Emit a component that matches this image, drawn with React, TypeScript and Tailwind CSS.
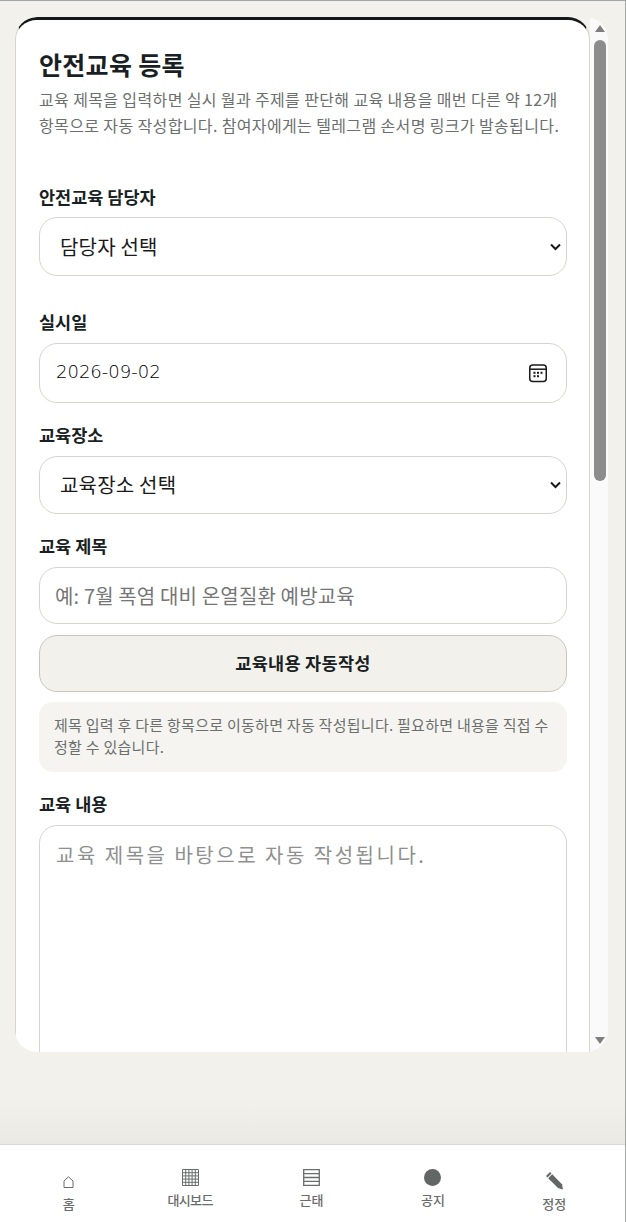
const NOTO = "font-['Noto_Sans_CJK_KR',sans-serif]";

const Label = ({ children, className = '' }: { children: string; className?: string }) => (
  <label className={`block text-[17.5px] font-bold leading-6 text-[#1a1f24] ${className}`}>{children}</label>
);

const fieldClass =
  'block w-full rounded-[18px] border border-[#d6d4cd] bg-white outline-none text-[20px] text-[#1a1a1a]';

const SelectField = ({ text, className }: { text: string; className: string }) => (
  <div className={`relative ${className}`}>
    <select className={`${fieldClass} h-full appearance-none pl-[20px] pr-[24px] tracking-[0.2px]`} defaultValue="">
      <option value="">{text}</option>
    </select>
    <svg
      className="pointer-events-none absolute right-[6px] top-1/2 -translate-y-1/2"
      width="11"
      height="8"
      viewBox="0 0 11 8"
      fill="none"
      stroke="#1a1a1a"
      strokeWidth="2"
    >
      <path d="M1 1.5l4.5 4.5L10 1.5" />
    </svg>
  </div>
);

const NavItem = ({ label, icon, low, tight }: { label: string; icon: React.ReactNode; low?: boolean; tight?: boolean }) => (
  <div className={`flex flex-1 flex-col items-center ${low ? 'pt-[4px]' : ''}`}>
    <div className="flex h-[24px] w-[24px] items-center justify-center">{icon}</div>
    <span className={`mt-[1px] text-[13px] font-medium leading-5 text-[#6a6d6b] ${tight ? 'tracking-[-0.6px]' : ''}`}>{label}</span>
  </div>
);

export default function App() {
  return (
    <div className={`flex h-[1222px] w-[626px] flex-col overflow-hidden border-t border-r border-[#a3a7a5] bg-[#f2f1ec] ${NOTO}`}>
      <div className="ml-[15px] mt-[16px] flex h-[1035px] w-[593px] overflow-hidden rounded-[22px]">
        <div className="h-[1035px] w-[575px] shrink-0 overflow-hidden rounded-t-[22px] border-x border-t-[3px] border-x-[#d6d4cd] border-t-[#14181b] bg-white pl-[23px] pr-[22px] pt-[26px]">
          <h1 className="text-[25px] font-bold leading-9 tracking-[0.3px] text-[#1a1f24]">안전교육 등록</h1>
          <p className="mt-[4px] text-[16px] leading-[26px] tracking-[0.37px] text-[#6b6f6d]">
            교육 제목을 입력하면 실시 월과 주제를 판단해 교육 내용을 매번 다른 약 12개 항목으로 자동 작성합니다. 참여자에게는 텔레그램 손서명 링크가 발송됩니다.
          </p>

          <Label className="mt-[47px]">안전교육 담당자</Label>
          <SelectField text="담당자 선택" className="mt-[8px] h-[59px]" />

          <Label className="mt-[34px]">실시일</Label>
          <div className="mt-[9px] flex h-[60px] items-center rounded-[18px] border border-[#d6d4cd] bg-white pl-[16px] pr-[18px]">
            <input
              className="min-w-0 flex-1 bg-transparent pb-[3px] font-['DejaVu_Sans',sans-serif] text-[18px] font-extralight text-black outline-none"
              defaultValue="2026-09-02"
            />
            <svg width="20" height="20" viewBox="0 0 20 20" fill="none" stroke="#1a1a1a" strokeWidth="1.5">
              <rect x="1.75" y="2" width="16.5" height="16.5" rx="3" />
              <path d="M2 6.2h16" />
              <g fill="#1a1a1a" stroke="none">
                <rect x="9" y="8.8" width="2" height="2" />
                <rect x="12.5" y="8.8" width="2" height="2" />
                <rect x="5.5" y="12.2" width="2" height="2" />
                <rect x="9" y="12.2" width="2" height="2" />
                <rect x="5.5" y="8.8" width="2" height="2" />
              </g>
            </svg>
          </div>

          <Label className="mt-[20px]">교육장소</Label>
          <SelectField text="교육장소 선택" className="mt-[9px] h-[58px]" />

          <Label className="mt-[20px]">교육 제목</Label>
          <input
            className={`${fieldClass} mt-[9px] h-[57px] px-[15px] tracking-[0.15px] placeholder:text-[#767676]`}
            placeholder="예: 7월 폭염 대비 온열질환 예방교육"
          />

          <button className="mt-[11px] block h-[57px] w-full rounded-[18px] border border-[#c8c5bc] bg-[#f2f1ec] text-[17.5px] font-bold tracking-[0.3px] text-[#1a1f24]">
            교육내용 자동작성
          </button>

          <div className="mt-[10px] break-all rounded-[14px] bg-[#f5f4f0] px-[15px] pb-[14px] pt-[12px] text-[15px] leading-[22px] tracking-[0.27px] text-[#6b6f6d]">
            제목 입력 후 다른 항목으로 이동하면 자동 작성됩니다. 필요하면 내용을 직접 수정할 수 있습니다.
          </div>

          <Label className="mt-[20px]">교육 내용</Label>
          <textarea
            className={`${fieldClass} mt-[9px] h-[320px] resize-none px-[16px] py-[14px] tracking-[2.5px] placeholder:text-[#8f8f8f]`}
            placeholder="교육 제목을 바탕으로 자동 작성됩니다."
          />
        </div>

        {/* scrollbar */}
        <div className="flex w-[18px] shrink-0 flex-col items-center bg-[#fafafa] pl-[2px]">
          <svg className="mt-[8px]" width="10" height="7" viewBox="0 0 10 7" fill="#7f7f7f"><path d="M5 0l5 7H0z" /></svg>
          <div className="mt-[8px] h-[441px] w-[12px] shrink-0 rounded-[6px] bg-[#8c8c8c]" />
          <svg className="mt-[556px] shrink-0" width="10" height="7" viewBox="0 0 10 7" fill="#7f7f7f"><path d="M5 7L0 0h10z" /></svg>
        </div>
      </div>

      <div className="h-[92px] flex-1 bg-gradient-to-b from-[#f2f1ec] from-50% to-[#eae9e4]" />

      <nav className="flex h-[78px] shrink-0 border-t border-[#dcd9d2] bg-white pl-[8px] pr-[10px] pt-[20px]">
        <NavItem
          low
          label="홈"
          icon={
            <svg className="mt-[2px]" width="11" height="12" viewBox="0 0 11 12" fill="none" stroke="#6a6d6b" strokeWidth="1">
              <path d="M1 11.5V5L5.5 .8 10 5v6.5z" />
            </svg>
          }
        />
        <NavItem
          tight
          label="대시보드"
          icon={
            <svg width="17" height="17" viewBox="0 0 17 17" fill="none" stroke="#6a6d6b" strokeWidth="1">
              <path d="M.5.5h16v16H.5zM.5 3.7h16M.5 6.9h16M.5 10.1h16M.5 13.3h16M3.7.5v16M6.9.5v16M10.1.5v16M13.3.5v16" />
            </svg>
          }
        />
        <NavItem
          label="근태"
          icon={
            <svg width="17" height="17" viewBox="0 0 17 17" fill="none" stroke="#6a6d6b" strokeWidth="1.3">
              <path d="M.7.7h15.6v15.6H.7zM.7 4.6h15.6M.7 8.5h15.6M.7 12.4h15.6" />
            </svg>
          }
        />
        <NavItem
          label="공지"
          icon={
            <svg width="17" height="17" viewBox="0 0 17 17" fill="#626664">
              <circle cx="8.5" cy="8.5" r="8.5" />
            </svg>
          }
        />
        <NavItem
          low
          label="정정"
          icon={
            <svg width="17" height="18" viewBox="0 0 17 18" fill="#626664">
              <path d="M4 0L0 4l1.5 1.5 4-4z" />
              <path d="M6.2 2.2L2.2 6.2 12 16l5 1.5-1-5.3z" />
            </svg>
          }
        />
      </nav>
    </div>
  );
}
